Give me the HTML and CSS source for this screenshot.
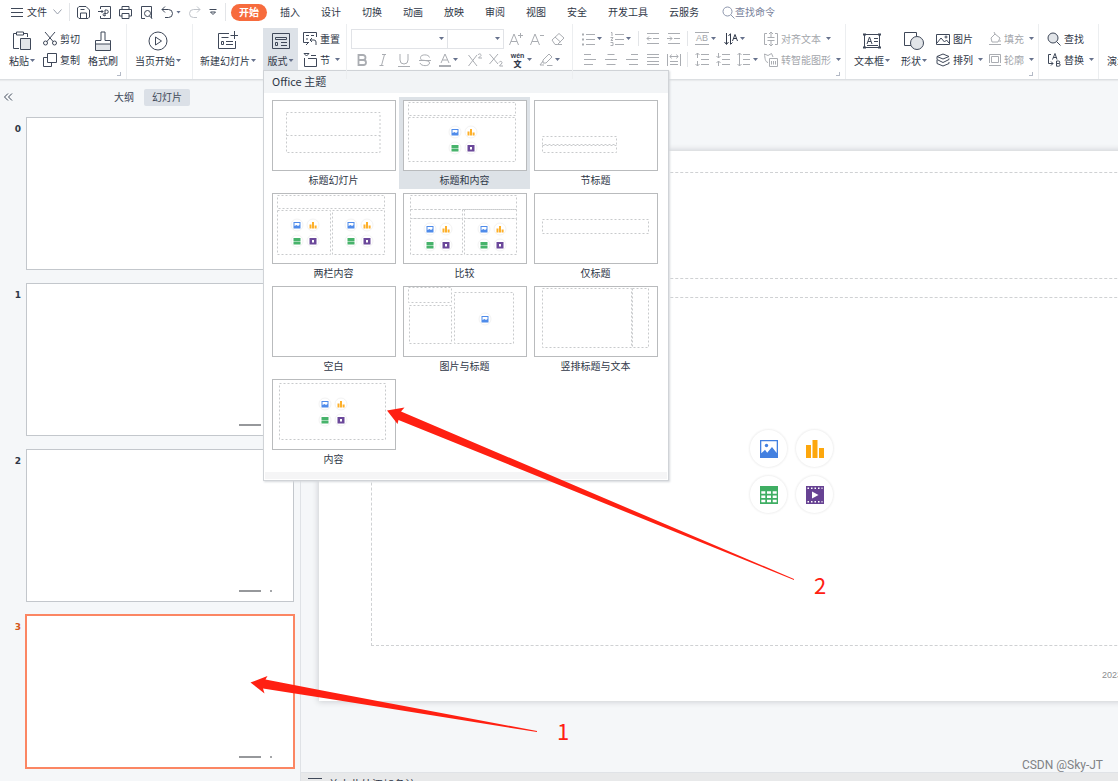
FILE: index.html
```html
<!DOCTYPE html>
<html lang="zh-CN">
<head>
<meta charset="utf-8">
<title>演示文稿</title>
<link rel="stylesheet" href="styles.css">
</head>
<body>
<svg class="sprite" aria-hidden="true">
  <symbol id="pic" viewBox="0 0 18 18"><path fill="#4380e0" fill-rule="evenodd" d="M0 0h18v18H0zM1.300 1.300v12L5 9.800l2.200 3L12 7l4.700 6V1.300z"/><circle cx="6.500" cy="5.500" r="1.700" fill="#4380e0"/></symbol>
  <symbol id="chart" viewBox="0 0 18 18"><path fill="#fda70d" d="M0 5h5v13H0zM6.500 0h5v18h-5zM13 8h5v10h-5z"/></symbol>
  <symbol id="table" viewBox="0 0 18 18"><path fill="#3fae63" fill-rule="evenodd" d="M0 0h18v18H0zM1.300 5.300v2.500h4V5.300zM7 5.300v2.500h4V5.300zM12.700 5.300v2.500h4V5.300zM1.300 9.500V12h4V9.500zM7 9.500V12h4V9.500zM12.700 9.500V12h4V9.500zM1.300 13.700v2.500h4v-2.500zM7 13.700v2.500h4v-2.500zM12.700 13.700v2.500h4v-2.500z"/></symbol>
  <symbol id="film" viewBox="0 0 18 18"><path fill="#674293" d="M0 0h18v18H0z"/><path fill="#fff" d="M6 5.500v7L12.500 9z"/><path stroke="#fff" stroke-width="1.500" stroke-dasharray="1.500 2" d="M1.500 2.300h15M1.500 15.700h15"/></symbol>
  <symbol id="minis" viewBox="0 0 30 30">
    <g fill="#fff" stroke="#f3f3f3"><circle cx="7" cy="7" r="6"/><circle cx="23" cy="7" r="6"/><circle cx="7" cy="23" r="6"/><circle cx="23" cy="23" r="6"/></g>
    <g stroke="none">
    <path fill="#4f8bea" fill-rule="evenodd" d="M3.500 4h7v6.500h-7zM4.500 5v3l2-1 1.500 1 1.500-1V5z"/>
    <path fill="#fdb02a" d="M19.500 6.500h2v4h-2zM22 4h2v6.500h-2zM24.600 7.500h2v3h-2z"/>
    <path fill="#47b36b" d="M3.500 20h7v3h-7zM3.500 23.500h7v3h-7z"/>
    <path fill="#6b489a" fill-rule="evenodd" d="M19.500 20h7v6.500h-7zM22 22v2.500h2V22z"/>
    </g>
  </symbol>
</svg>

<div class="app">
<nav class="menubar">
  <button class="file"><svg width="12" height="10" viewBox="0 0 12 10"><path d="M0 1.500h12M0 5.500h12M0 9.500h12"/></svg>文件<svg class="chev" width="9" height="6" viewBox="0 0 9 6"><path d="M.5.500l4 4.500 4-4.500"/></svg></button>
  <div class="quick">
    <button aria-label="保存"><svg width="13" height="13" viewBox="0 0 13 13"><path d="M2 .500h7l3.500 3.500v7l-1.500 1.500H2L.500 11V2zM3.500 12.500V7h6v5.500M3.500 3.500h4"/></svg></button>
    <button aria-label="输出"><svg width="13" height="13" viewBox="0 0 13 13"><path d="M2.500 3V.500h10v12h-10V10M0 5.500h5M3.500 4l1.500 1.500L3.500 7M7 10V4h1.500a1.500 1.500 0 010 3.500H6.500a1.200 1.200 0 101 1.500"/></svg></button>
    <button aria-label="打印"><svg width="13" height="13" viewBox="0 0 13 13"><path d="M3 3.500V.500h7v3M3 10H.500V3.500h12V10H10M3 7.500h7v5H3z"/></svg></button>
    <button aria-label="打印预览"><svg width="13" height="13" viewBox="0 0 13 13"><path d="M5 12.500H1.500V.500h10v12M9.500 10l2.500 2.500"/><circle cx="7.500" cy="7.500" r="3"/></svg></button>
    <button aria-label="撤销"><svg width="12" height="13" viewBox="0 0 12 13"><path d="M4 .500L1 3.500l3 3M1 3.500h6.500a4 4 0 010 8H4"/></svg><i class="caret"></i></button>
    <button class="off" aria-label="恢复"><svg width="12" height="13" viewBox="0 0 12 13"><path d="M8 .500l3 3-3 3M11 3.500H4.500a4 4 0 000 8H8"/></svg></button>
    <button aria-label="更多"><svg width="8" height="8" viewBox="0 0 8 8"><path d="M.5 1.500h7M1.500 4l2.500 2.500L6.500 4z"/></svg></button>
  </div>
  <div class="tabs">
    <button class="on">开始</button><button>插入</button><button>设计</button><button>切换</button><button>动画</button><button>放映</button><button>审阅</button><button>视图</button><button>安全</button><button>开发工具</button><button>云服务</button>
  </div>
  <button class="find"><svg width="13" height="13" viewBox="0 0 13 13"><circle cx="5.500" cy="5.500" r="4.500"/><path d="M9 9l3.500 3.500"/></svg>查找命令</button>
</nav>

<header class="ribbon">
  <section class="group clip">
    <button class="big"><svg width="20" height="20" viewBox="0 0 20 20"><path d="M7 17.500H1.500v-15h3M12 2.500h3.500V6M4.500 1h7v3h-7z"/><path fill="#e2e5e9" d="M8.500 7.500h10v11h-10z"/></svg><span>粘贴<i class="caret"></i></span></button>
    <div class="stack">
      <button class="tool"><svg width="14" height="14" viewBox="0 0 14 14"><path d="M2 0l8.500 10M12 0L3.500 10"/><circle cx="2.500" cy="11" r="2"/><circle cx="11.500" cy="11" r="2"/></svg>剪切</button>
      <button class="tool"><svg width="14" height="14" viewBox="0 0 14 14"><path d="M4.500.500h9v9h-9zM4.500 4.500h-4v9h8v-4"/></svg>复制</button>
    </div>
    <button class="big"><svg width="18" height="20" viewBox="0 0 18 20"><path fill="#e2e5e9" stroke="none" d="M2 13h14v6H2z"/><path d="M7 9.500V1h4v8.500h5.500v10h-15v-10zM1.500 13h15"/></svg><span>格式刷</span></button>
    <i class="corner"></i>
  </section>
  <section class="group play">
    <button class="big"><svg width="20" height="20" viewBox="0 0 20 20"><circle cx="10" cy="10" r="9"/><path d="M7.500 6v8l6-4z"/></svg><span>当页开始<i class="caret"></i></span></button>
  </section>
  <section class="group slides">
    <button class="big"><svg width="20" height="20" viewBox="0 0 20 20"><path d="M11 2.500H.500v15h17V10M3.500 6.500h7M3.500 10.500h2v3h-2zM8 10.500h7M8 13.500h7M16.500 0v8M12.500 4.500h7.500"/></svg><span>新建幻灯片<i class="caret"></i></span></button>
    <div class="menuwrap">
      <button class="big open" aria-expanded="true"><svg width="20" height="20" viewBox="0 0 20 20"><path d="M1.500 2.500h17v15h-17zM4.500 6.500h11v2h-11zM4.500 11.500h2v3h-2zM10 11.500h6M10 14.500h6"/></svg><span>版式<i class="caret"></i></span></button>
      <div class="panel">
        <h2>Office 主题</h2>
        <div class="layouts">
          <button><svg viewBox="1 1 122 69"><path d="M14.500 12.500h93.500v40h-93.500zM14.500 35.500h93.500"/></svg>标题幻灯片</button>
          <button class="sel"><svg viewBox="1 1 122 69"><path d="M5.500 2.500h107v13h-107zM5.500 17.500h107v44h-107z"/><use href="#minis" x="45" y="25" width="30" height="30"/></svg>标题和内容</button>
          <button><svg viewBox="1 1 122 69"><path d="M8.500 36.500h74v8h-74zM8.500 45.500h74v7h-74z"/></svg>节标题</button>
          <button><svg viewBox="1 1 122 69"><path d="M5.500 2.500h107v13h-107zM5.500 17.500h53v44h-53zM60.500 17.500h52v44h-52z"/><use href="#minis" x="18" y="25" width="30" height="30"/><use href="#minis" x="72" y="25" width="30" height="30"/></svg>两栏内容</button>
          <button><svg viewBox="1 1 122 69"><path d="M7.500 2.500h106v14h-106zM7.500 16.500h52v9h-52zM61.500 16.500h52v9h-52zM7.500 25.500h52v36h-52zM61.500 25.500h52v36h-52z"/><use href="#minis" x="20" y="29" width="30" height="30"/><use href="#minis" x="74" y="29" width="30" height="30"/></svg>比较</button>
          <button><svg viewBox="1 1 122 69"><path d="M8.500 26.500h106v14h-106z"/></svg>仅标题</button>
          <button><svg viewBox="1 1 122 69"></svg>空白</button>
          <button><svg viewBox="1 1 122 69"><path d="M5.500 1.500h43v15h-43zM6.500 19.500h42v38h-42zM51.500 6.500h59v51h-59z"/><circle cx="82" cy="33" r="6"/><path class="blue" fill-rule="evenodd" d="M78.500 30h7v6.500h-7zM79.500 31v3l2-1 1.500 1 1.500-1v-2z"/></svg>图片与标题</button>
          <button><svg viewBox="1 1 122 69"><path d="M8.500 2.500h89v59h-89zM98.500 2.500h16v59h-16z"/></svg>竖排标题与文本</button>
          <button><svg viewBox="1 1 122 69"><path d="M7.500 4.500h106v56h-106z"/><use href="#minis" x="46" y="18" width="30" height="30"/></svg>内容</button>
        </div>
        <div class="panelfoot"></div>
      </div>
    </div>
    <div class="stack">
      <button class="tool"><svg width="14" height="14" viewBox="0 0 14 14"><path d="M5 10.500H.500v-10h13V5M3 3.500h3M8 3.500h3M3 7h2M9 6L7 8l2 2M7 8h4a2 2 0 012 2v3M3 13l3-3"/></svg>重置</button>
      <button class="tool"><svg width="14" height="14" viewBox="0 0 14 14"><path d="M1 .500h5L3.500 3zM1.500 5v8.500h12v-8H5M8 2.500h5"/></svg>节<i class="caret wide"></i></button>
    </div>
  </section>
  <section class="group font off">
    <div class="stack">
      <div class="row">
        <div class="combo name"><input aria-label="字体"><i class="caret"></i></div><div class="combo size"><input aria-label="字号"><i class="caret"></i></div>
        <button class="slot first" aria-label="增大字号"><svg width="14" height="14" viewBox="0 0 14 14"><path d="M.5 13L5 2l4.500 11M2 9.500h6M9 3.500h5M11.500 1v5"/></svg></button>
        <button class="slot" aria-label="减小字号"><svg width="14" height="14" viewBox="0 0 14 14"><path d="M.5 13L5 2l4.500 11M2 9.500h6M10 3.500h4"/></svg></button>
        <button class="slot" aria-label="清除格式"><svg width="14" height="14" viewBox="0 0 14 14"><path d="M1 8l7-6.500L13 6l-6.500 6.500H4zM4 5l5.500 5M6.500 12.500H11"/></svg></button>
      </div>
      <div class="row">
        <button class="slot" aria-label="加粗"><svg width="12" height="14" viewBox="0 0 12 14"><path stroke-width="1.800" d="M2.500 2H7a2.300 2.300 0 010 5H2.500zM2.500 7h5a2.500 2.500 0 010 5h-5z"/></svg></button>
        <button class="slot" aria-label="倾斜"><svg width="12" height="14" viewBox="0 0 12 14"><path d="M5 1.500h4M2.500 12.500h4M7.500 1.500l-3 11"/></svg></button>
        <button class="slot" aria-label="下划线"><svg width="12" height="14" viewBox="0 0 12 14"><path d="M2 1v6a4 4 0 008 0V1M0 13.500h12"/></svg></button>
        <button class="slot" aria-label="删除线"><svg width="12" height="14" viewBox="0 0 12 14"><path d="M10.500 4.500C10 1 1.500 1 1.500 4.500S4 7 6 7.500s4.500 0 4.500 2.500c0 3.500-8.500 3.500-9.500 0M0 7.500h12"/></svg></button>
        <button class="drop" aria-label="字体颜色"><svg width="12" height="14" viewBox="0 0 12 14"><path d="M2 10l4-9 4 9M3.500 7h5M0 12.500h12v1H0z"/></svg><i class="caret"></i></button>
        <button class="slot" aria-label="上标"><svg width="14" height="14" viewBox="0 0 14 14"><path d="M.5 2l8.500 11M9 2L.500 13M10 2c1-2 3.500-1 3 .5L10.500 5H14"/></svg></button>
        <button class="slot" aria-label="下标"><svg width="14" height="14" viewBox="0 0 14 14"><path d="M.5 1L9 11M9 1L.500 11M10 9.500c1-2 3.500-1 3 .5l-2.500 3H14"/></svg></button>
        <button class="drop dark pinyin" aria-label="拼音指南"><span>wén</span><b>文</b><i class="caret"></i></button>
        <button class="drop" aria-label="突出显示"><svg width="14" height="14" viewBox="0 0 14 14"><path d="M4 7l6-6 3 3-6 6H4zM4 8l-3 4h4M8 12.500h5.500"/></svg><i class="caret"></i></button>
      </div>
    </div>
  </section>
  <section class="group para off">
    <div class="stack">
      <div class="row">
        <button class="drop" aria-label="项目符号"><svg width="14" height="14" viewBox="0 0 14 14"><path d="M5 2.500h9M5 7.500h9M5 12.500h9"/><path stroke-width="2" d="M1 2.500h2M1 7.500h2M1 12.500h2"/></svg><i class="caret"></i></button>
        <button class="drop" aria-label="编号"><svg width="14" height="14" viewBox="0 0 14 14"><path d="M5 2.500h9M5 7.500h9M5 12.500h9M1 .500h1V4M.500 5.500H3L1 8.500h2M.500 10.500H3v3H.500"/></svg><i class="caret"></i></button>
        <i class="bar"></i>
        <button class="slot" aria-label="减少缩进"><svg width="14" height="12" viewBox="0 0 14 12"><path d="M1 .500h12M7 5.500h6M1 10.500h12M5.500 5.500H1M3 3.500l-2 2 2 2"/></svg></button>
        <button class="slot" aria-label="增加缩进"><svg width="14" height="12" viewBox="0 0 14 12"><path d="M1 .500h12M7 5.500h6M1 10.500h12M0 5.500h5M3 3.500l2 2-2 2"/></svg></button>
        <i class="bar"></i>
        <button class="drop ab" aria-label="文字方向"><span>AB</span><i class="caret"></i></button>
        <button class="drop dark" aria-label="排序"><svg width="14" height="14" viewBox="0 0 14 14"><path d="M2.500 1v11M.500 10l2 2.500 2-2.500M6.500 12V2M4.500 4l2-2.500M6.500 12.500l2-2M8.500 9L11 2.500 13.500 9M9.500 6.500h3"/></svg><i class="caret"></i></button>
        <button class="tool alignt"><svg width="14" height="14" viewBox="0 0 14 14"><path d="M3 1.500H.500v11H3M11 1.500h2.500v11H11M3.500 5.500h7M3.500 8.500h7M7 0v5M5 2l2-2 2 2M7 9v5M5 12l2 2 2-2"/></svg>对齐文本<i class="caret wide"></i></button>
      </div>
      <div class="row second">
        <button class="slot" aria-label="左对齐"><svg width="12" height="12" viewBox="0 0 12 12"><path d="M0 .500h7M0 5.500h12M0 10.500h9"/></svg></button>
        <button class="slot" aria-label="居中"><svg width="12" height="12" viewBox="0 0 12 12"><path d="M2.500 .500h7M0 5.500h12M1.500 10.500h9"/></svg></button>
        <button class="slot" aria-label="右对齐"><svg width="12" height="12" viewBox="0 0 12 12"><path d="M5 .500h7M0 5.500h12M3 10.500h9"/></svg></button>
        <button class="slot" aria-label="两端对齐"><svg width="12" height="12" viewBox="0 0 12 12"><path d="M0 .500h12M0 3.500h12M0 7.500h12M0 10.500h12"/></svg></button>
        <button class="slot" aria-label="分散对齐"><svg width="14" height="12" viewBox="0 0 14 12"><path d="M.5 0v12M13.500 0v12M3 2.500h8M4.500.500L3 2.500l1.500 2M9.500.500l1.500 2-1.500 2M3 7.500h8M3 10.500h8"/></svg></button>
        <i class="bar"></i>
        <button class="slot" aria-label="增加段距"><svg width="14" height="13" viewBox="0 0 14 13"><path d="M6 1.500h8M6 6.500h8M6 11.500h8M2.500 5V0M.500 2l2-2 2 2M2.500 8v5M.500 11l2 2 2-2"/></svg></button>
        <button class="slot" aria-label="减少段距"><svg width="14" height="13" viewBox="0 0 14 13"><path d="M6 1.500h8M6 6.500h8M6 11.500h8M2.500 0v5M.500 3l2 2 2-2M2.500 13V8M.500 10l2-2 2 2"/></svg></button>
        <button class="drop" aria-label="行距"><svg width="14" height="13" viewBox="0 0 14 13"><path d="M6 1.500h7M6 6.500h7M6 11.500h7M2.500 0v13M.500 2l2-2 2 2M.500 11l2 2 2-2"/></svg><i class="caret"></i></button>
        <button class="tool smart"><svg width="14" height="14" viewBox="0 0 14 14"><path d="M4 9.500C1 9 1 5 .500 1L4 2.500 7.500.500 9 4M5.500 5.500h8v8h-8zM7.500 8v3.500M9.500 8v3.500M11.500 8v3.500"/></svg>转智能图形<i class="caret wide"></i></button>
      </div>
    </div>
    <i class="corner"></i>
  </section>
  <section class="group draw">
    <button class="big"><svg width="20" height="20" viewBox="0 0 20 20"><path d="M2.500 3.500h15v13h-15zM5 13l2.500-7L10 13M6 10.500h3M12 7.500h4M12 10.500h4M5 14.500h11"/><path stroke-width="2" d="M1 3.500h3M16 3.500h3M1 16.500h3M16 16.500h3"/></svg><span>文本框<i class="caret"></i></span></button>
    <button class="big"><svg width="22" height="20" viewBox="0 0 22 20"><path d="M8 14.500H1.500v-13h12V5"/><circle cx="14" cy="12" r="6.500" fill="#e2e5e9"/></svg><span>形状<i class="caret"></i></span></button>
    <div class="stack">
      <button class="tool"><svg width="14" height="14" viewBox="0 0 14 14"><path d="M.5 2.500h13v10H.500zM1 11l4-5 3.500 4 2-2L13 11"/><circle cx="10" cy="5" r="1"/></svg>图片</button>
      <button class="tool"><svg width="14" height="14" viewBox="0 0 14 14"><path d="M1 3.500L7 1l6 2.500L7 6zM1 3.500v3L7 9.500l6-3v-1M1 7v3.500L7 13l6-2.500V9"/></svg>排列<i class="caret wide"></i></button>
    </div>
    <div class="stack off">
      <button class="tool"><svg width="12" height="14" viewBox="0 0 12 14"><path d="M2 6l4-4 5 4-2 4H3zM6 2L5 0M11 8v2M0 12.500h12"/></svg>填充<i class="caret wide"></i></button>
      <button class="tool"><svg width="12" height="14" viewBox="0 0 12 14"><path d="M.500 10V1.500h11V10M2.500 9.500v-6h7v6zM0 12.500h12"/></svg>轮廓<i class="caret wide"></i></button>
    </div>
    <i class="corner"></i>
  </section>
  <section class="group seek">
    <div class="stack">
      <button class="tool"><svg width="14" height="14" viewBox="0 0 14 14"><circle cx="6" cy="6" r="5" fill="#e2e5e9"/><path d="M9.500 9.500l4 4"/></svg>查找</button>
      <button class="tool"><svg width="14" height="14" viewBox="0 0 14 14"><path d="M4 1.500H1.500v9H6M4 8.500l2 2-2 2M5.500 6.500L8 .500l2 6M6 4.500h3.500M9.500 8h2a1.200 1.200 0 010 2.500h-2zM9.500 10.500h2.300a1.300 1.300 0 010 2.700H9.500z"/></svg>替换<i class="caret wide"></i></button>
    </div>
  </section>
  <section class="group show">
    <button class="big"><svg width="20" height="20" viewBox="0 0 20 20"></svg><span>演示工具</span></button>
  </section>
</header>

<main class="work">
  <aside class="outline">
    <div class="viewtabs"><button class="fold" aria-label="收起"><svg width="9" height="8" viewBox="0 0 9 8"><path d="M4 .500L.500 4 4 7.500M8 .500L4.500 4 8 7.500"/></svg></button><button>大纲</button><button class="cur">幻灯片</button></div>
    <ol class="thumbs">
      <li><b>0</b><div class="thumb"></div></li>
      <li><b>1</b><div class="thumb"><i></i></div></li>
      <li><b>2</b><div class="thumb"><i></i><em></em></div></li>
      <li class="cur"><b>3</b><div class="thumb"><i></i><em></em></div></li>
    </ol>
  </aside>
  <div class="stage">
    <div class="desk">
      <article class="slide">
        <div class="hold title"></div>
        <div class="hold body">
          <div class="inserts">
            <button aria-label="图片"><svg width="18" height="18"><use href="#pic"/></svg></button>
            <button aria-label="图表"><svg width="18" height="18"><use href="#chart"/></svg></button>
            <button aria-label="表格"><svg width="18" height="18"><use href="#table"/></svg></button>
            <button aria-label="媒体"><svg width="18" height="18"><use href="#film"/></svg></button>
          </div>
        </div>
        <footer>2023</footer>
      </article>
    </div>
    <div class="notes"><svg width="14" height="10" viewBox="0 0 14 10"><path d="M0 1.500h14M0 5.500h14M0 9.500h14"/></svg>单击此处添加备注</div>
  </div>
</main>
</div>
<svg class="marks" width="1118" height="781" viewBox="0 0 1118 781">
  <path d="M387 410.500l17.500-3-3.500 4L794 579v1L398.500 420l-1 4zM250.500 682.500L267.500 676l-2 3.500L330 692l207 39v1L330 699l-67-10.500 1.500 5z"/>
  <text x="814" y="594">2</text><text x="557" y="740">1</text>
</svg>
<div class="credit">CSDN @Sky-JT</div>
</body>
</html>
```
FILE: styles.css
```css
* { box-sizing: border-box; }
body { margin: 0; height: 100vh; overflow: hidden; font: 10px/14px "Noto Sans CJK SC", sans-serif; color: #2f3747; background: #f5f7f9; }
button { border: 0; margin: 0; padding: 0; background: none; font: inherit; color: inherit; white-space: nowrap; flex: none; display: flex; align-items: center; }
svg { display: block; flex: none; fill: none; stroke: #3f4859; }
.sprite { position: absolute; width: 0; height: 0; }
symbol { stroke: none; }
.app { height: 100vh; display: flex; flex-direction: column; }
.caret { flex: none; width: 5px; height: 3px; margin-left: 1px; background: #66718c; clip-path: polygon(0 0, 100% 0, 50% 100%); }
.caret.wide { margin-left: 5px; }

.menubar { flex: none; height: 24px; display: flex; align-items: center; background: #fff; }
.file { padding-left: 11px; width: 70px; gap: 4px; height: 18px; border-right: 1px solid #e3e5e8; }
.file .chev { margin-left: 2px; stroke: #9aa1ad; }
.quick { display: flex; align-items: center; gap: 8px; width: 156px; height: 18px; padding-left: 7px; border-right: 1px solid #e3e5e8; }
.quick .caret { margin-left: 3px; }
.quick .off svg { stroke: #c0c4ca; }
.tabs { display: flex; gap: 21px; padding-left: 5px; }
.tabs .on { width: 36px; height: 17px; margin-right: -8px; justify-content: center; border-radius: 9px; background: #f76b3d; color: #fff; font-weight: 700; }
.find { margin-left: 23px; color: #77819a; }
.find svg { stroke: #8d96ac; }

.ribbon { flex: none; height: 56px; display: flex; padding-left: 1px; background: #fff; border-bottom: 1px solid #dcdfe2; box-shadow: 0 1px 1px #e9ebed; position: relative; z-index: 2; }
.group { flex: none; display: flex; align-items: flex-start; padding-top: 4px; border-left: 1px solid #eceef0; position: relative; }
.big { flex-direction: column; height: 42px; padding-top: 3px; }
.big svg { height: 20px; }
.big span { display: flex; align-items: center; height: 20px; }
.tool { height: 21px; }
.tool svg { margin-right: 3px; }
.row { display: flex; align-items: center; height: 21px; }
.corner { position: absolute; right: 5px; bottom: 3px; width: 4px; height: 4px; border: solid #b4bac6; border-width: 0 1px 1px 0; }
.clip { border-left: 0; padding-left: 8px; padding-right: 8px; gap: 8px; }
.play { padding-left: 8px; padding-right: 11px; }
.slides { padding-left: 7px; padding-right: 6px; }
.slides .stack { padding-left: 5px; }
.menuwrap { position: relative; margin-left: 7px; }
.open { background: #dde2e8; width: 35px; }
.off { color: #a3a6ab; }
.off svg { stroke: #aaadb2; }
.dark { color: #333b4c; }
.off .dark svg { stroke: #333b4c; }
.font { padding-left: 4px; width: 226px; }
.combo { display: flex; align-items: center; height: 20px; border: 1px solid #e1e3e7; padding-right: 3px; }
.combo input { flex: 1; min-width: 0; width: 10px; height: 16px; border: 0; padding: 0; }
.combo.name { width: 97px; }
.combo.size { width: 56px; border-left: 0; }
.slot { width: 21px; height: 21px; justify-content: center; }
.slot.first { margin-left: 1px; }
.drop { width: 29px; height: 21px; padding-left: 4px; }
.drop .caret { margin-left: 2px; }
.pinyin { display: grid; grid-template-columns: 15px 7px; grid-template-rows: 7px 9px; align-content: center; justify-items: center; font: 700 8px/9px "Noto Sans CJK SC", sans-serif; }
.pinyin span { font: 700 7px/7px "Liberation Sans", sans-serif; }
.pinyin b { grid-row: 2; }
.pinyin .caret { grid-row: 1 / 3; grid-column: 2; }
.para { padding-left: 4px; width: 273px; }
.para .second { padding-left: 2px; }
.para .ab span { width: 14px; text-align: center; font: 9px/11px "Liberation Sans", sans-serif; border: solid #aaadb2; border-width: 1px 0; }
.bar { width: 1px; height: 15px; margin: 0 3px; background: #e3e5e8; }
.alignt { margin-left: 15px; }
.smart { margin-left: 2px; }
.draw { padding-left: 8px; width: 193px; }
.draw .big + .big { margin: 0 9px 0 11px; }
.draw .stack + .stack { padding-left: 6px; }
.seek { padding-left: 8px; width: 60px; }
.show { padding-left: 8px; }

.panel { position: absolute; top: 42px; left: 0; width: 406px; background: #fff; border: 1px solid #d0d3d7; box-shadow: 1px 1px 2px #d5d8dc; }
.panel h2 { margin: 0; padding: 0 8px; height: 22px; font: 11px/20px "Noto Sans CJK SC", sans-serif; background: #f2f4f6; }
.layouts { display: grid; grid-template-columns: repeat(3, 131px); grid-auto-rows: 93px; padding: 4px 4px 0; }
.layouts button { flex-direction: column; height: 92px; padding: 3px 4px; }
.layouts svg { width: 124px; height: 71px; margin-bottom: 2px; border: 1px solid #b9bbbd; background: #fff; }
.layouts svg > path { stroke: #c8cacc; stroke-dasharray: 2 2; }
.layouts svg > circle { stroke: #f3f3f3; }
.layouts svg > .blue { fill: #4f8bea; stroke: none; }
.layouts .sel { background: #dde2e7; }
.panelfoot { height: 7px; margin: 3px 1px 1px; background: #f5f5f6; }

.work { flex: 1; min-height: 0; display: flex; }
.outline { flex: none; width: 301px; border-right: 1px solid #dfe2e6; }
.viewtabs { display: flex; align-items: center; height: 34px; padding-left: 4px; color: #414959; }
.fold { width: 110px; }
.viewtabs .cur { margin-left: 10px; padding: 0 8px; height: 17px; border-radius: 2px; background: #dbe0e7; }
.thumbs { list-style: none; margin: 0; padding: 3px 0 0; }
.thumbs li { display: flex; margin-bottom: 13px; }
.thumbs b { width: 26px; padding: 5px 5px 0 0; text-align: right; font: 700 9px/14px "DejaVu Sans", sans-serif; }
.thumb { width: 268px; height: 153px; border: 1px solid #c3c7cc; background: #fff; display: flex; align-items: flex-end; padding: 0 0 9px 212px; gap: 9px; }
.thumb i { width: 22px; height: 2px; background: #96989b; }
.thumb em { width: 2px; height: 2px; background: #a5a7aa; }
.cur b { color: #d4571c; }
.cur .thumb { outline: 1px solid #fb8663; border-color: #fb8663; }
.stage { flex: 1; min-width: 0; display: flex; flex-direction: column; }
.desk { flex: 1; min-height: 0; overflow: hidden; padding: 71px 0 0 18px; }
.slide { width: 945px; padding: 21px 52px 0; height: 550px; background: #fff; box-shadow: 0 0 6px 1px #cdd0d3; }
.hold { border: 1px dashed #cfd1d3; }
.title { height: 107px; margin-bottom: 18px; }
.body { height: 349px; display: flex; align-items: center; justify-content: center; }
.inserts { display: grid; grid-template-columns: 37px 37px; gap: 9px; }
.inserts button { height: 37px; justify-content: center; border-radius: 50%; background: #fff; box-shadow: 0 0 2px 1px #f0f0f0; }
.inserts svg { stroke: none; }
.slide footer { padding: 22px 0 0 731px; color: #8b8d90; font: 9px/14px "Liberation Sans", sans-serif; }
.notes { flex: none; height: 9px; padding: 4px 0 0 7px; display: flex; gap: 6px; overflow: hidden; background: #e8e9ea; border-top: 1px solid #e0e3e7; font-size: 11px; line-height: 14px; }
.marks { position: absolute; top: 0; left: 0; z-index: 5; pointer-events: none; fill: #ff2012; stroke: none; font-size: 22px; }
.credit { position: absolute; right: 15px; bottom: 9px; z-index: 5; font: 12px/14px Roboto, sans-serif; color: #808285; }
```
